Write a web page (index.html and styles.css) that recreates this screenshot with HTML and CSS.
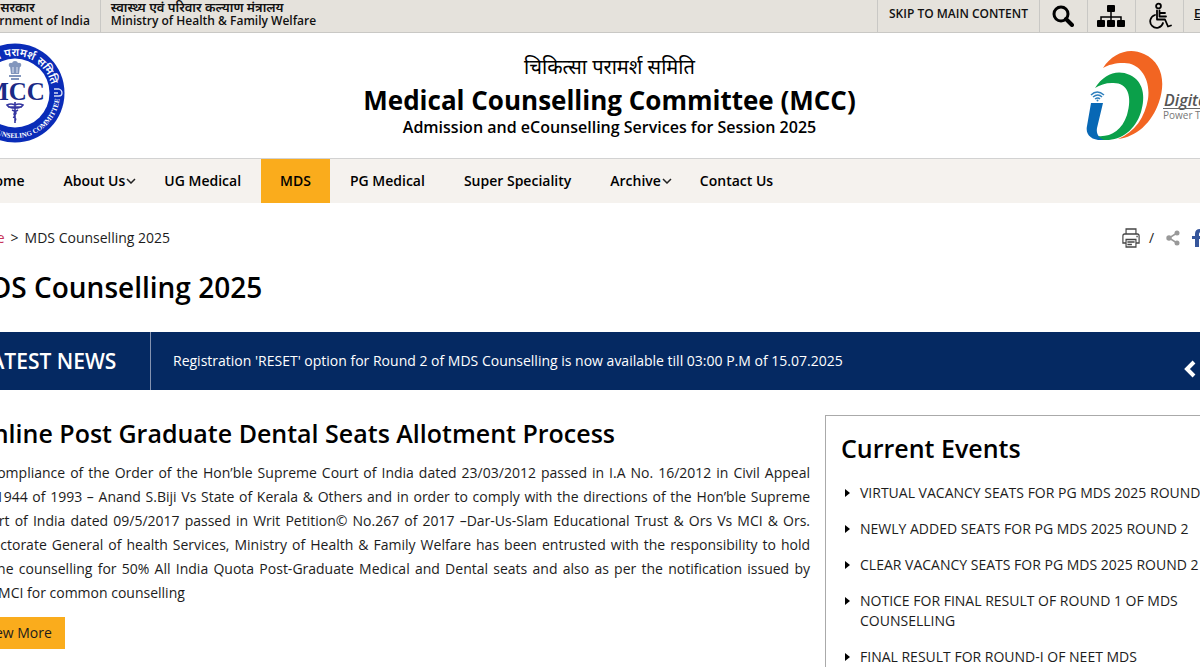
FILE: index.html
```html
<!DOCTYPE html>
<html lang="en">
<head>
<meta charset="utf-8">
<title>MDS Counselling 2025</title>
<link rel="stylesheet" href="styles.css">
</head>
<body>
<div class="page">
  <div class="topbar">
    <a class="gov gov-india" href="#"><span lang="hi">भारत सरकार</span><span>Government of India</span></a>
    <a class="gov" href="#"><span lang="hi">स्वास्थ्य एवं परिवार कल्याण मंत्रालय</span><span>Ministry of Health &amp; Family Welfare</span></a>
    <div class="tools">
      <a class="tool skip" href="#main">SKIP TO MAIN CONTENT</a>
      <button class="tool" type="button" aria-label="Search">
        <svg width="22" height="22" viewBox="0 0 22 22" fill="none" stroke="#000"><circle cx="9" cy="9" r="7" stroke-width="3"/><path d="M14 14l6 6" stroke-width="4" stroke-linecap="round"/></svg>
      </button>
      <a class="tool" href="#" aria-label="Sitemap">
        <svg width="28" height="24" viewBox="0 0 28 24"><path d="M14 8v8M4 17v-4h20v4" fill="none" stroke="#000" stroke-width="1.500"/><rect x="10" y="1" width="8" height="7" rx="1"/><rect x="0" y="16" width="8" height="7" rx="1"/><rect x="10" y="16" width="8" height="7" rx="1"/><rect x="20" y="16" width="8" height="7" rx="1"/></svg>
      </a>
      <button class="tool" type="button" aria-label="Accessibility">
        <svg width="26" height="28" viewBox="0 0 26 28" fill="none" stroke="#000" stroke-width="1.800" stroke-linecap="round" stroke-linejoin="round"><circle cx="12.500" cy="4" r="2.400"/><path d="M11 8.500v9h8l3 7 3-1M13.500 8.500v6H20M14 11h5M9 13a6.500 6.500 0 1 0 8 8"/></svg>
      </button>
      <a class="tool lang" href="#">English</a>
    </div>
  </div>

  <header class="header">
    <svg class="mcc" viewBox="0 0 100 100" role="img" aria-label="MCC">
      <defs><path id="arc-top" d="M13 50a37 37 0 0 1 74 0"/><path id="arc-bottom" d="M5 50a45 45 0 0 0 90 0"/></defs>
      <circle cx="50" cy="50" r="49.500" fill="#0a2cb8"/>
      <circle cx="50" cy="50" r="34.500" fill="#fff"/>
      <text class="mcc-hindi" lang="hi"><textPath href="#arc-top" startOffset="50%" text-anchor="middle">चिकित्सा परामर्श समिति</textPath></text>
      <text class="mcc-ring"><textPath href="#arc-bottom" startOffset="50%" text-anchor="middle">MEDICAL COUNSELING COMMITTEE</textPath></text>
      <g fill="none" stroke="#d5dcf5" stroke-width="1.300"><path d="M89 46h5q3 1 3 4t-3 3h-2M89 50h4M89 53h3M11 46H6q-3 1-3 4t3 3h2M11 50H7"/></g>
      <g fill="#8296bd"><circle cx="50" cy="21" r="3"/><circle cx="46" cy="22" r="2.300"/><circle cx="54" cy="22" r="2.300"/><path d="M45 23h10l-1 8h-8zM44 32h12v2H44zM46 35h8v2h-8z"/></g>
      <path d="M48 24v6M52 24v6" stroke="#dfe5f3"/>
      <text class="mcc-name" x="50" y="57" text-anchor="middle">MCC</text>
      <g stroke="#3536a0" fill="none" stroke-width="1.600"><path d="M50 59v21M50 62q-4-2-8 0 2 3 8 3M50 62q4-2 8 0-2 3-8 3M43 64h14M47 67q6 2 3 5M53 67q-6 3-3 6M48 74q4 1 2 4"/></g>
    </svg>
    <div class="titles">
      <p class="title-hindi" lang="hi">चिकित्सा परामर्श समिति</p>
      <p class="title">Medical Counselling Committee (MCC)</p>
      <p class="subtitle">Admission and eCounselling Services for Session 2025</p>
    </div>
    <a class="digital" href="#" aria-label="Digital India">
      <svg width="168" height="92" viewBox="0 0 168 92">
        <path d="M17 18C27 3 43-3 58 4c18 8 22 28 15 48C66 73 50 87 32 89c17-7 27-22 30-40 3-21-9-37-25-36-8 0-15 2-20 5z" fill="#f26522"/>
        <path d="M9 38C18 24 31 19 44 25c13 6 16 21 11 37C49 81 34 91 18 90c-6 0-10-2-12-5 15 4 29-2 35-20 6-20 0-33-15-32-7 0-12 2-17 5z" fill="#0ba04a"/>
        <path d="M5 53h12l-6 25c-1 6 2 10 7 12C6 91-1 85 1 76z" fill="#0868b5"/>
        <g fill="none" stroke="#2e7fbd" stroke-width="1.500"><path d="M5 45q6-6 13 0M7 47q5-4 9 0M9 49q3-2 5 0"/></g><circle cx="11.500" cy="50.500" r="1" fill="#2e7fbd"/>
        <text class="digital-name" x="78" y="56">Digital India</text>
        <text class="digital-tag" x="77" y="69">Power To Empower</text>
        <path d="M77 58.500h86" stroke="#666"/>
      </svg>
    </a>
  </header>

  <nav class="nav">
    <a href="#">Home</a>
    <a href="#" class="drop">About Us<svg viewBox="0 0 10 6"><path d="M1 1l4 4 4-4"/></svg></a>
    <a href="#">UG Medical</a>
    <a href="#" class="active">MDS</a>
    <a href="#">PG Medical</a>
    <a href="#">Super Speciality</a>
    <a href="#" class="drop">Archive<svg viewBox="0 0 10 6"><path d="M1 1l4 4 4-4"/></svg></a>
    <a href="#">Contact Us</a>
  </nav>

  <div class="crumbs">
    <div class="trail"><a href="#">Home</a><span>&gt;</span><span>MDS Counselling 2025</span></div>
    <div class="share">
      <button type="button" aria-label="Print">
        <svg width="18" height="20" viewBox="0 0 20 20" preserveAspectRatio="none" fill="none" stroke="#444" stroke-width="1.300"><path d="M4.500 6V1h11v5M4.500 15H1V8q0-2 2-2h14q2 0 2 2v7h-3.500"/><path d="M4.500 11.500h11V19h-11zM6 14h8M6 16.500h5M16 8.500h1.500"/></svg>
      </button>
      <span>/</span>
      <a class="share-link" href="#" aria-label="Share"><svg width="14" height="16" viewBox="0 0 14 16" fill="#999"><path d="M11 3L3 8l8 5" fill="none" stroke="#999" stroke-width="1.500"/><circle cx="11" cy="3" r="2.500"/><circle cx="3" cy="8" r="2.700"/><circle cx="11" cy="13" r="2.500"/></svg></a>
      <a href="#" aria-label="Facebook"><svg width="12" height="18" viewBox="0 0 12 18"><path d="M3 18V10H0V7h3V5q0-5 5-5h3v3H9Q7 3 7 5v2h4l-1 3H7v8z" fill="#36569b"/></svg></a>
    </div>
  </div>

  <main id="main">
    <h1>MDS Counselling 2025</h1>
    <section class="news">
      <h2>LATEST NEWS</h2>
      <a href="#">Registration 'RESET' option for Round 2 of MDS Counselling is now available till 03:00 P.M of 15.07.2025</a>
      <button type="button" aria-label="Previous"><svg width="12" height="18" viewBox="0 0 12 18"><path d="M10 2L3 9l7 7" fill="none" stroke="#fff" stroke-width="4"/></svg></button>
    </section>
    <div class="columns">
      <article class="process">
        <h2>Online Post Graduate Dental Seats Allotment Process</h2>
        <p>In compliance of the Order of the Hon’ble Supreme Court of India dated 23/03/2012 passed in I.A No. 16/2012 in Civil Appeal No.1944 of 1993 – Anand S.Biji Vs State of Kerala &amp; Others and in order to comply with the directions of the Hon’ble Supreme Court of India dated 09/5/2017 passed in Writ Petition© No.267 of 2017 –Dar-Us-Slam Educational Trust &amp; Ors Vs MCI &amp; Ors. Directorate General of health Services, Ministry of Health &amp; Family Welfare has been entrusted with the responsibility to hold online counselling for 50% All India Quota Post-Graduate Medical and Dental seats and also as per the notification issued by the&nbsp;MCI for common counselling</p>
        <a class="more" href="#">View More</a>
      </article>
      <aside class="events">
        <h2>Current Events</h2>
        <ul>
          <li><a href="#">VIRTUAL VACANCY SEATS FOR PG MDS 2025 ROUND 2</a></li>
          <li><a href="#">NEWLY ADDED SEATS FOR PG MDS 2025 ROUND 2</a></li>
          <li><a href="#">CLEAR VACANCY SEATS FOR PG MDS 2025 ROUND 2</a></li>
          <li><a href="#">NOTICE FOR FINAL RESULT OF ROUND 1 OF MDS COUNSELLING</a></li>
          <li><a href="#">FINAL RESULT FOR ROUND-I OF NEET MDS</a></li>
        </ul>
      </aside>
    </div>
  </main>
</div>
</body>
</html>
```
FILE: styles.css
```css
* { box-sizing: border-box; }
body {
  margin: 0;
  overflow: hidden;
  background: #fff;
  color: #1c1c1c;
  font: 14px/20px "Open Sans", "Noto Sans", sans-serif;
}
h1, h2, p, ul { margin: 0; padding: 0; }
a { color: inherit; text-decoration: none; }
button { padding: 0; border: 0; background: none; font: inherit; }
svg { display: block; }

/* The sheet is wider than the window and runs out on both sides */
.page {
  display: flex;
  flex-direction: column;
  min-height: 100vh;
  margin: 0 -54px 0 -35px;
}

.topbar {
  display: flex;
  height: 33px;
  background: #e5e2dc;
  border-bottom: 1px solid #c9c8c5;
  color: #111;
  font-size: 12px;
  font-weight: 600;
}
.gov {
  display: flex;
  flex-direction: column;
  padding: 1px 10px 0;
  line-height: 13px;
  white-space: nowrap;
}
.gov [lang="hi"] { font-size: 13px; }
.gov-india { padding-left: 5px; border-right: 1px solid #c9c8c5; }
.tools { display: flex; margin-left: auto; }
.tool {
  display: flex;
  align-items: center;
  justify-content: center;
  width: 48px;
  padding-right: 2px;
  border-left: 1px solid #c9c8c5;
}
.skip { width: auto; padding: 0 11px 4px; }
.lang {
  justify-content: flex-start;
  width: 71px;
  padding: 0 0 4px 10px;
  text-decoration: underline;
}

.header {
  display: grid;
  grid-template-columns: 168px 1fr 168px;
  align-items: center;
  height: 125px;
}
.mcc { width: 100px; height: 100px; margin-bottom: 6px; }
.mcc-hindi { fill: #fff; font: 600 11px "Noto Sans", sans-serif; }
.mcc-ring { fill: #fff; font: 700 7px "Liberation Serif", serif; }
.mcc-name { fill: #1a2a86; font: 700 25px "Liberation Serif", serif; }
.titles { margin-bottom: 4px; text-align: center; color: #000; }
.title-hindi { font-size: 20px; line-height: 32px; }
.title { font-size: 26px; font-weight: 700; line-height: 34px; }
.subtitle { font-size: 16px; font-weight: 600; line-height: 20px; }
.digital-name { fill: #555; font: italic 600 16px "Open Sans", sans-serif; }
.digital-tag { fill: #777; font: 10px "Open Sans", sans-serif; }

.nav {
  display: flex;
  gap: 1px;
  height: 45px;
  background: #f5f2ee;
  border-top: 1px solid #d2d2d2;
  color: #000;
  font-weight: 600;
  line-height: 44px;
}
.nav a { position: relative; padding: 0 19px; }
.nav .active { background: #faac1c; }
.drop svg {
  position: absolute;
  right: 8px;
  top: 19px;
  width: 10px;
  fill: none;
  stroke: #222;
  stroke-width: 1.5;
}

.crumbs {
  display: flex;
  justify-content: space-between;
  align-items: center;
  height: 70px;
}
.trail { display: flex; gap: 6px; }
.trail a { color: #c8325a; }
.share { display: flex; align-items: center; gap: 9px; width: 132px; }
.share-link { margin: 0 3px; }

main { display: flex; flex: 1; flex-direction: column; }
h1 { height: 59px; color: #000; font-size: 28px; font-weight: 600; line-height: 28px; }
.news {
  display: flex;
  align-items: center;
  height: 58px;
  background: #052962;
  color: #fff;
}
.news h2 {
  width: 186px;
  padding-left: 14px;
  border-right: 1px solid #8593b0;
  font-size: 21px;
  font-weight: 600;
  line-height: 58px;
}
.news a { flex: 1; padding-left: 22px; }
.news button { width: 70px; padding-top: 16px; }

.columns {
  display: grid;
  grid-template-columns: 1fr 429px;
  flex: 1;
  gap: 15px;
  padding: 25px 0 0 8px;
}
.columns h2 { color: #000; font-size: 25px; font-weight: 600; line-height: 36px; }
.process p { margin: 10px 0 12px; line-height: 24px; text-align: justify; }
.more {
  display: inline-block;
  padding: 0 13px 0 10px;
  background: #faac1c;
  line-height: 32px;
}
.events { padding: 14px 15px 0; border: 1px solid #aaa; border-bottom: 0; }
.events ul { display: grid; gap: 16px; margin-top: 17px; list-style: none; }
.events li { display: flex; gap: 10px; }
.events li::before {
  content: "";
  margin: 6px 0 0 4px;
  align-self: flex-start;
  border: 4px solid transparent;
  border-left: 5px solid #000;
  border-right: 0;
}
```
